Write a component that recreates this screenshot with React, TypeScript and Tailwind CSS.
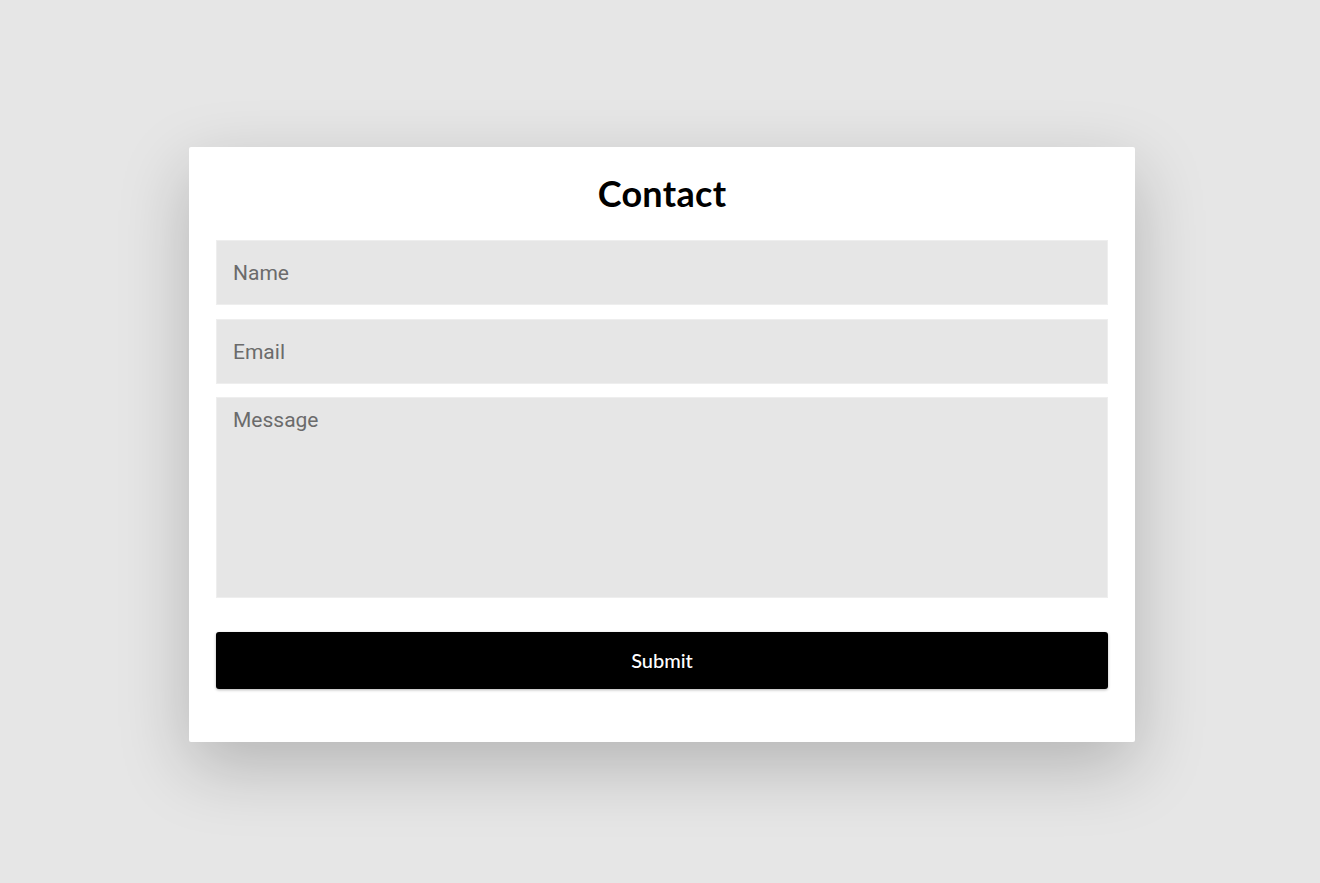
import React from "react";

export default function App() {
  const field =
    "w-full bg-[#e6e6e6] px-[16px] text-[21px] text-[#333] placeholder:text-[#6b6b6b] outline-none border border-[#eeeeee] font-['Roboto',sans-serif]";
  return (
    <div className="min-h-[883px] w-full bg-[#e6e6e6] flex justify-center pt-[147px] pl-[4px]">
      <div className="w-[946px] h-[595px] bg-white rounded-[2px] shadow-[0_24px_70px_rgba(0,0,0,0.22)] px-[27px] pt-[18px] flex flex-col">
        <h1 className="h-[56px] leading-[56px] text-center text-[36px] font-bold text-black mb-[19px] tracking-[0.3px] font-['Lato','Open_Sans',sans-serif]">
          Contact
        </h1>
        <input placeholder="Name" className={`h-[65px] ${field}`} />
        <input placeholder="Email" className={`mt-[14px] h-[65px] ${field}`} />
        <textarea placeholder="Message" className={`mt-[13px] h-[201px] pt-[7px] resize-none ${field}`} />
        <button className="mt-[34px] h-[57px] w-full bg-black text-white text-[20px] font-medium rounded-[3px] shadow-[0_1px_3px_rgba(0,0,0,0.3)] pb-[2px] font-['Lato','Open_Sans',sans-serif]">
          Submit
        </button>
      </div>
    </div>
  );
}
